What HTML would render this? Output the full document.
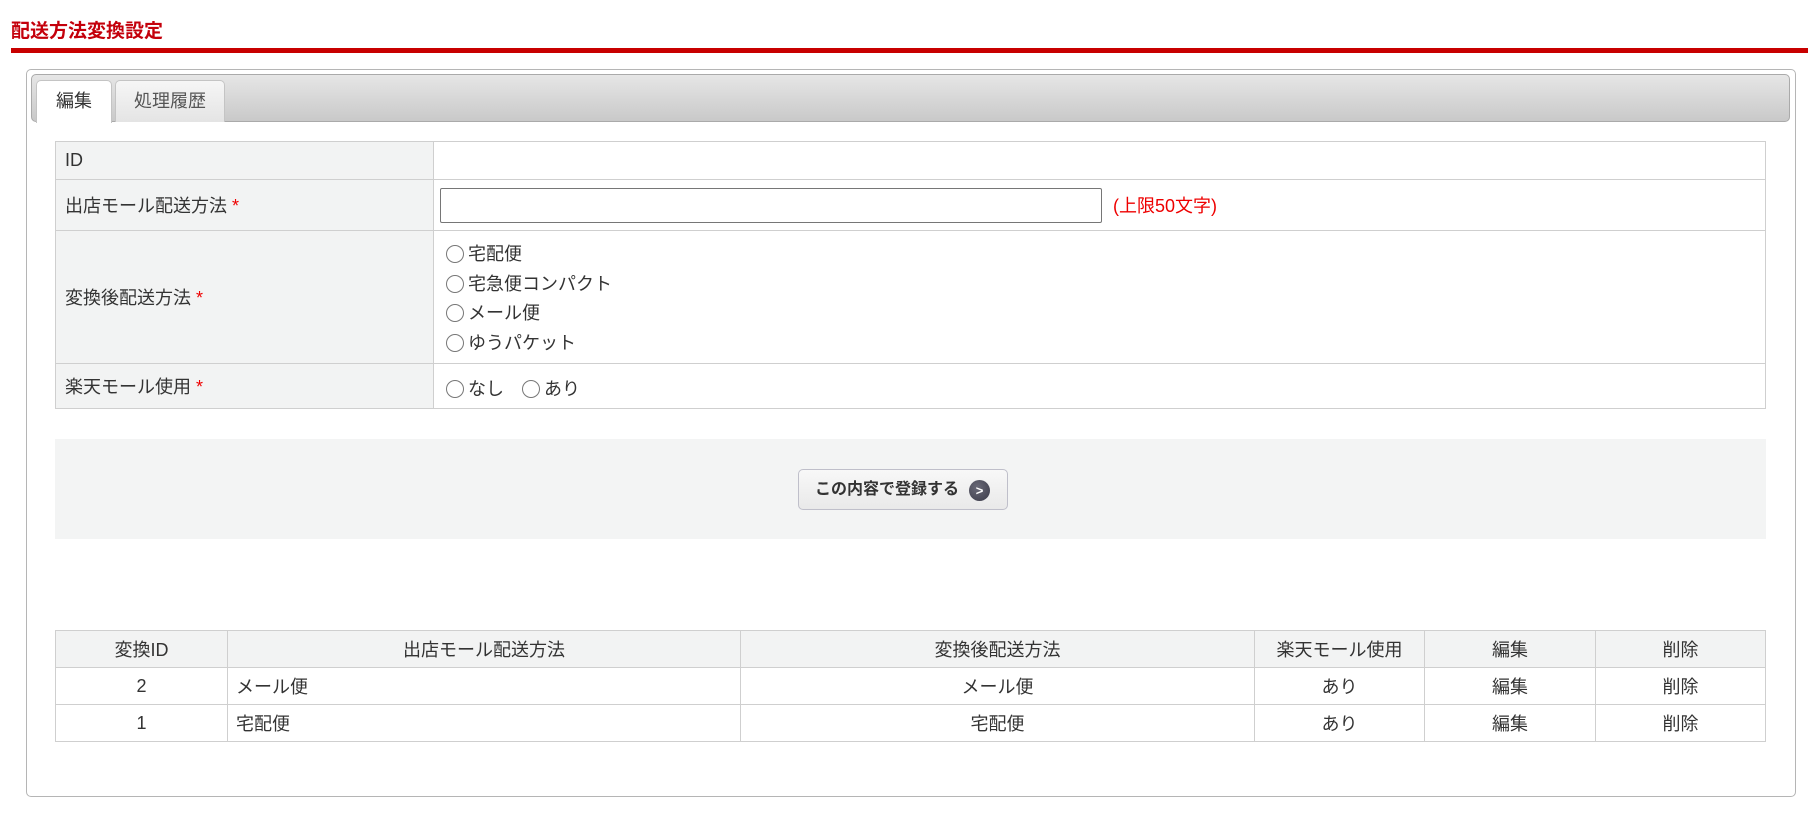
<!DOCTYPE html>
<html><head><meta charset="utf-8"><style>
*{box-sizing:border-box;margin:0;padding:0}
body{width:1808px;height:814px;background:#fff;font-family:"Liberation Sans","Noto Sans CJK JP",sans-serif;color:#333;font-size:18px;position:relative;overflow:hidden}
.abs{position:absolute}
.title{left:11px;top:16px;font-size:19px;font-weight:bold;color:#c4000b}
.rl{left:11px;top:48px;width:1797px;height:5px;background:#c80000}
.box{left:26px;top:69px;width:1770px;height:728px;border:1px solid #b5b5b5;border-radius:5px}
.bar{left:31px;top:74px;width:1759px;height:48px;border:1px solid #aaa;border-radius:5px;background:linear-gradient(#e6e6e6,#c9c9c9)}
.tab{top:80px;height:42px;border:1px solid #c4c4c4;border-bottom:none;border-radius:5px 5px 0 0;text-align:center;line-height:40px;font-size:18px}
table{border-collapse:collapse;position:absolute}
td,th{border:1px solid #cfcfcf;font-weight:normal}
.f td.l{background:#f2f3f3;padding-left:9px}
.f td.r{padding-left:6px}
.req{color:#e00}
.radio{display:inline-block;width:18px;height:18px;border:1.5px solid #777;border-radius:50%;vertical-align:-3px;margin-right:4px;background:#fff}
.l2 th{background:#f2f3f3}
.l2 td,.l2 th{text-align:center;height:37px}
</style></head><body>
<div class="abs title">配送方法変換設定</div>
<div class="abs rl"></div>
<div class="abs box"></div>
<div class="abs bar"></div>
<div class="abs tab" style="left:36px;width:76px;background:#fff;height:43px">編集</div>
<div class="abs tab" style="left:115px;width:110px;background:linear-gradient(#f6f6f6,#e4e4e4);color:#555">処理履歴</div>
<table class="f" style="left:55px;top:141px;width:1711px">
<tr style="height:38px"><td class="l" style="width:378px">ID</td><td class="r"></td></tr>
<tr style="height:51px"><td class="l">出店モール配送方法 <span class="req">*</span></td><td class="r"><span style="display:inline-block;width:662px;height:35px;border:1px solid #767676;border-radius:2px;vertical-align:middle"></span> <span style="color:#e00;margin-left:6px;position:relative;top:2px">(上限50文字)</span></td></tr>
<tr style="height:133px"><td class="l">変換後配送方法 <span class="req">*</span></td><td class="r" style="padding-left:12px;padding-top:4px;line-height:29.5px"><span class="radio"></span>宅配便<br><span class="radio"></span>宅急便コンパクト<br><span class="radio"></span>メール便<br><span class="radio"></span>ゆうパケット</td></tr>
<tr style="height:45px"><td class="l">楽天モール使用 <span class="req">*</span></td><td class="r" style="padding-left:12px;padding-top:4px"><span class="radio"></span>なし　<span class="radio"></span>あり</td></tr>
</table>
<div class="abs" style="left:55px;top:439px;width:1711px;height:100px;background:#f3f4f4"></div>
<div class="abs" style="left:798px;top:469px;width:210px;height:41px;border:1px solid #bfbfca;border-radius:5px;background:linear-gradient(#f8f8f8,#e9e9e9);font-weight:bold;font-size:16px;line-height:39px;padding-left:16px;color:#333">この内容で登録する<span style="position:absolute;left:170px;top:10px;width:21px;height:21px;border-radius:50%;background:radial-gradient(circle at 40% 35%,#6a6a78,#3a3a48);color:#fff;font-size:13px;line-height:21px;text-align:center">&gt;</span></div>
<table class="l2" style="left:55px;top:630px;width:1711px">
<tr><th style="width:172px">変換ID</th><th style="width:513px">出店モール配送方法</th><th style="width:514px">変換後配送方法</th><th style="width:170px">楽天モール使用</th><th style="width:171px">編集</th><th>削除</th></tr>
<tr><td>2</td><td style="text-align:left;padding-left:8px">メール便</td><td>メール便</td><td>あり</td><td>編集</td><td>削除</td></tr>
<tr><td>1</td><td style="text-align:left;padding-left:8px">宅配便</td><td>宅配便</td><td>あり</td><td>編集</td><td>削除</td></tr>
</table>
</body></html>
